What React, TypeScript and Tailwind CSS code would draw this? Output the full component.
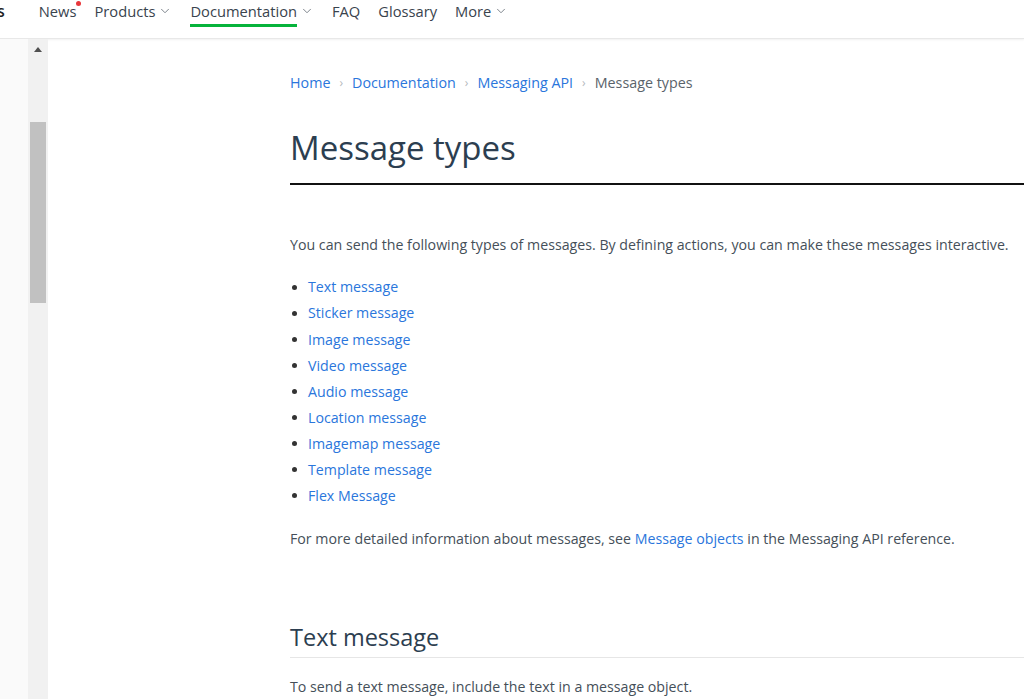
import { ChevronDown } from "lucide-react";

const font = { fontFamily: '"Open Sans", "Noto Sans", sans-serif' };

const types = [
  "Text message",
  "Sticker message",
  "Image message",
  "Video message",
  "Audio message",
  "Location message",
  "Imagemap message",
  "Template message",
  "Flex Message",
];

function NavItem({ label, caret, active, dot }: { label: string; caret?: boolean; active?: boolean; dot?: boolean }) {
  return (
    <div className="relative flex items-center h-full">
      <span className="relative text-[14.7px] text-[#39434d]">
        {label}
        {dot && <span className="absolute -right-[5px] top-[1px] w-[5px] h-[5px] rounded-full bg-[#e8363a]" />}
        {active && <span className="absolute left-0 right-0 top-[24px] h-[3px] bg-[#06b33b]" />}
      </span>
      {caret && <ChevronDown className="ml-[3px] w-[14px] h-[14px] text-[#6b747d]" strokeWidth={1.5} />}
    </div>
  );
}

export default function App() {
  return (
    <div className="w-[1024px] h-[699px] overflow-hidden bg-white flex flex-col" style={font}>
      {/* Top nav */}
      <div className="h-[39px] shrink-0 flex items-start border-b border-[#e8e8e8] shadow-[0_1px_2px_rgba(0,0,0,0.06)]">
        <div className="flex items-center h-[22px] gap-[18px] -ml-[3px]">
          <span className="text-[16px] font-semibold text-[#222] mr-[16px]">s</span>
          <NavItem label="News" dot />
          <NavItem label="Products" caret />
          <NavItem label="Documentation" caret active />
          <NavItem label="FAQ" />
          <NavItem label="Glossary" />
          <NavItem label="More" caret />
        </div>
      </div>

      <div className="flex flex-1 min-h-0">
        {/* Sidebar */}
        <div className="w-[28px] bg-[#fafafa]" />
        <div className="w-[20px] bg-[#f1f1f1] flex flex-col items-center">
          <div className="mt-[8px] w-0 h-0 border-l-[4px] border-r-[4px] border-b-[5px] border-l-transparent border-r-transparent border-b-[#505050]" />
          <div className="mt-[70px] w-[16px] h-[181px] bg-[#c1c1c1]" />
        </div>

        {/* Main */}
        <div className="flex-1 pl-[242px]">
          <div className="flex items-center gap-[9px] text-[14.3px] mt-[33px] h-[22px]">
            <span className="text-[#2a76dc]">Home</span>
            <span className="text-[#b5b9bd] text-[12px]">›</span>
            <span className="text-[#2a76dc]">Documentation</span>
            <span className="text-[#b5b9bd] text-[12px]">›</span>
            <span className="text-[#2a76dc]">Messaging API</span>
            <span className="text-[#b5b9bd] text-[12px]">›</span>
            <span className="text-[#5a636b]">Message types</span>
          </div>

          <h1 className="mt-[30px] text-[33px] leading-[48px] text-[#2c3e50] font-medium">Message types</h1>
          <div className="mt-[11px] h-[2px] bg-[#111]" />

          <p className="mt-[49px] text-[14.2px] leading-[22px] text-[#454f59]">
            You can send the following types of messages. By defining actions, you can make these messages interactive.
          </p>

          <ul className="mt-[18px]">
            {types.map((t) => (
              <li key={t} className="flex items-center h-[26.1px]">
                <span className="ml-[2px] w-[5px] h-[5px] rounded-full bg-[#333] mr-[11px]" />
                <span className="text-[14.2px] text-[#2a76dc]">{t}</span>
              </li>
            ))}
          </ul>

          <p className="mt-[19px] text-[14.2px] leading-[22px] text-[#454f59]">
            For more detailed information about messages, see <span className="text-[#2a76dc]">Message objects</span> in the Messaging API reference.
          </p>

          <h2 className="mt-[72px] text-[23.5px] leading-[30px] text-[#2c3e50] font-medium">Text message</h2>
          <div className="mt-[5px] h-px bg-[#e6e6e6]" />

          <p className="mt-[18px] text-[14.2px] leading-[22px] text-[#454f59]">
            To send a text message, include the text in a message object.
          </p>
        </div>
      </div>
    </div>
  );
}
